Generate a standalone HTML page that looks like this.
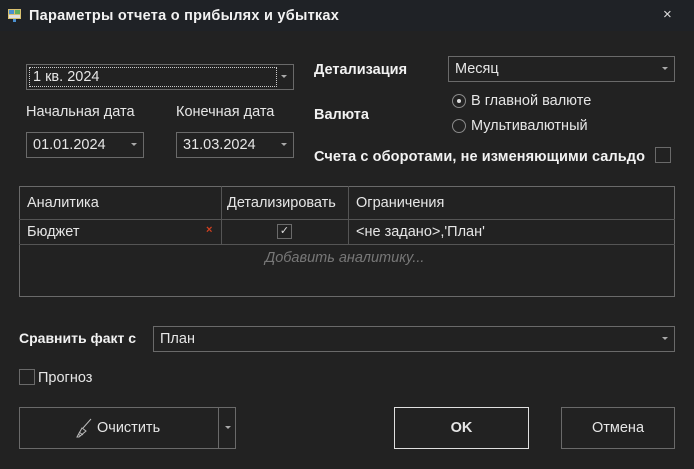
<!DOCTYPE html>
<html><head><meta charset="utf-8"><style>
*{box-sizing:border-box;margin:0;padding:0}
body{width:694px;height:469px;background:#222222;font-family:"Liberation Sans",sans-serif;font-size:14.5px;color:#e6e6e6;position:relative;overflow:hidden}
.a{position:absolute}
.tb{left:0;top:0;width:694px;height:31px;background:#1f2226}
.b{font-weight:bold;color:#f2f2f2;font-size:14px}
.cb{border:1px solid #6a6a6a;background:#222}
.arr{position:absolute;right:6px;top:10px;width:0;height:0;border-left:3px solid transparent;border-right:3px solid transparent;border-top:3px solid #aaa}
.ct{position:absolute;left:6px;top:4px}
.chk{border:1px solid #6a6a6a;width:16px;height:16px}
.rad{border:1px solid #8a8a8a;border-radius:50%;width:14px;height:14px}
.btn{border:1px solid #6a6a6a;text-align:center}
</style></head><body>
<div class="a tb"></div>
<svg class="a" style="left:8px;top:8px" width="14" height="14"><rect x="0" y="1" width="13" height="10" fill="#d8c070"/><rect x="1" y="2" width="5" height="4" fill="#4a90d0"/><rect x="7" y="2" width="5" height="4" fill="#60b060"/><rect x="1" y="7" width="11" height="3" fill="#e0e0e0"/><rect x="5" y="11" width="3" height="3" fill="#4a90d0"/></svg>
<div class="a b" style="left:29px;top:8px;font-size:14.5px;letter-spacing:0.25px">Параметры отчета о прибылях и убытках</div>
<div class="a" style="left:663px;top:6px;font-size:15px;color:#ddd">×</div>

<div class="a cb" style="left:26px;top:64px;width:268px;height:26px"><div class="a" style="left:2px;top:2px;width:248px;height:20px;border:1px dotted #ccc"></div><div class="ct">1 кв. 2024</div><div class="arr"></div></div>
<div class="a" style="left:26px;top:104px">Начальная дата</div>
<div class="a" style="left:176px;top:104px">Конечная дата</div>
<div class="a cb" style="left:26px;top:132px;width:118px;height:26px"><div class="ct">01.01.2024</div><div class="arr"></div></div>
<div class="a cb" style="left:176px;top:132px;width:118px;height:26px"><div class="ct">31.03.2024</div><div class="arr"></div></div>

<div class="a b" style="left:314px;top:62px;font-size:14.5px">Детализация</div>
<div class="a cb" style="left:448px;top:56px;width:227px;height:26px"><div class="ct">Месяц</div><div class="arr"></div></div>
<div class="a b" style="left:314px;top:107px;font-size:14.5px">Валюта</div>
<div class="a rad" style="left:452px;top:94px"><div class="a" style="left:4px;top:4px;width:4px;height:4px;border-radius:50%;background:#ddd"></div></div>
<div class="a" style="left:471px;top:93px">В главной валюте</div>
<div class="a rad" style="left:452px;top:119px"></div>
<div class="a" style="left:471px;top:118px">Мультивалютный</div>
<div class="a b" style="left:314px;top:149px;font-size:14.5px;letter-spacing:0.1px">Счета с оборотами, не изменяющими сальдо</div>
<div class="a chk" style="left:655px;top:147px"></div>

<div class="a" style="left:19px;top:186px;width:656px;height:111px;border:1px solid #6a6a6a"></div>
<div class="a" style="left:19px;top:219px;width:656px;border-top:1px solid #555"></div>
<div class="a" style="left:19px;top:244px;width:656px;border-top:1px solid #555"></div>
<div class="a" style="left:221px;top:186px;height:58px;border-left:1px solid #555"></div>
<div class="a" style="left:348px;top:186px;height:58px;border-left:1px solid #555"></div>
<div class="a" style="left:27px;top:195px">Аналитика</div>
<div class="a" style="left:227px;top:195px">Детализировать</div>
<div class="a" style="left:356px;top:195px">Ограничения</div>
<div class="a" style="left:27px;top:224px">Бюджет</div>
<div class="a" style="left:206px;top:224px;color:#d04020;font-size:11px;font-weight:bold">×</div>
<div class="a chk" style="left:277px;top:224px;width:15px;height:15px;font-size:11px;text-align:center;line-height:13px;color:#ddd">✓</div>
<div class="a" style="left:356px;top:224px">&lt;не задано&gt;,'План'</div>
<div class="a" style="left:265px;top:250px;font-style:italic;color:#777">Добавить аналитику...</div>

<div class="a b" style="left:19px;top:330px">Сравнить факт с</div>
<div class="a cb" style="left:153px;top:326px;width:522px;height:26px"><div class="ct">План</div><div class="arr"></div></div>
<div class="a chk" style="left:19px;top:369px"></div>
<div class="a" style="left:38px;top:370px">Прогноз</div>

<div class="a btn" style="left:19px;top:407px;width:217px;height:42px"></div>
<div class="a" style="left:218px;top:407px;height:42px;border-left:1px solid #6a6a6a"></div>
<div class="a" style="left:225px;top:426px;border-left:3px solid transparent;border-right:3px solid transparent;border-top:3px solid #aaa"></div>
<svg class="a" style="left:73px;top:418px" width="20" height="20"><path d="M18 1 L10 10 M4 19 L9 10 L13 13 L6 19 Z M6 14 L10 17 M5 16 L8 18" stroke="#bbb" fill="none" stroke-width="1"/></svg>
<div class="a" style="left:97px;top:420px">Очистить</div>
<div class="a btn" style="left:394px;top:407px;width:135px;height:42px;border-color:#e0e0e0;line-height:40px;font-weight:bold">OK</div>
<div class="a btn" style="left:561px;top:407px;width:114px;height:42px;line-height:40px">Отмена</div>
</body></html>
